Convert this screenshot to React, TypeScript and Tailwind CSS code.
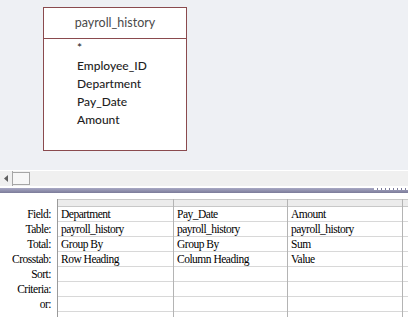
const fields = ["*", "Employee_ID", "Department", "Pay_Date", "Amount"];

const labels = ["Field:", "Table:", "Total:", "Crosstab:", "Sort:", "Criteria:", "or:", ""];

const columns = [
  { w: "w-[116px]", cells: ["Department", "payroll_history", "Group By", "Row Heading", "", "", "", ""] },
  { w: "w-[114px]", cells: ["Pay_Date", "payroll_history", "Group By", "Column Heading", "", "", "", ""] },
  { w: "w-[115px]", cells: ["Amount", "payroll_history", "Sum", "Value", "", "", "", ""] },
  { w: "w-[20px]", cells: ["", "", "", "", "", "", "", ""] },
];

function TableBox() {
  return (
    <div className="h-[144px] w-[144px] border border-[#8a4a4e] bg-white">
      <div className="flex h-[31px] items-center justify-center border-b border-[#8a4a4e] font-['Lato',sans-serif] text-[12.5px] text-[#4a4a4a]">
        payroll_history
      </div>
      <ul className="pl-[33px] font-['Lato',sans-serif] text-[12px] font-medium leading-[18px] text-[#1e1e1e]">
        {fields.map((f) => (
          <li key={f}>{f}</li>
        ))}
      </ul>
    </div>
  );
}

function ScrollStrip() {
  return (
    <div className="flex h-[16px] border-t border-white bg-[#f0f0f0]">
      <div className="flex w-[13px] items-center justify-center border-r border-[#a6a6a6]">
        <svg width="5" height="7" viewBox="0 0 5 7" aria-hidden>
          <path d="M4 0 L0 3.5 L4 7 Z" fill="#606060" />
        </svg>
      </div>
      <div className="my-[1px] w-[17px] border border-l-0 border-[#a6a6a6] bg-[#f7f7f7]" />
    </div>
  );
}

function Splitter() {
  return (
    <div className="mt-[2px] flex h-[5px] justify-end bg-gradient-to-b from-[#a9a9c4] to-[#7b7b99]">
      <div className="h-[2px] w-[34px] bg-[repeating-linear-gradient(90deg,#ffffff_0_3px,#7b7b99_3px_4px)]" />
    </div>
  );
}

export default function App() {
  return (
    <div className="h-[317px] w-[408px] overflow-hidden bg-white">
      <div className="h-[170px] bg-[#eef0f4] pl-[43px] pt-[7px]">
        <TableBox />
      </div>
      <ScrollStrip />
      <Splitter />
      <div className="mt-[6px] flex font-['Liberation_Serif',serif] text-[11.5px] tracking-[-0.5px] text-black">
        <div className="w-[57px] shrink-0 pt-[8px]">
          {labels.map((l, i) => (
            <div key={i} className="h-[15px] pr-[6px] text-right leading-[15px]">
              {l}
            </div>
          ))}
        </div>
        <div className="flex shrink-0 border-l border-[#9a9a9a]">
          {columns.map((c, ci) => (
            <div key={ci} className={`${c.w} shrink-0 border-r border-[#b4b4b4]`}>
              <div className="h-[8px] border-b border-t border-[#c8c8c8] bg-[#ececec]" />
              {c.cells.map((t, ri) => (
                <div key={ri} className="h-[15px] border-b border-[#d8d8d8] pl-[3px] leading-[14px]">
                  {t}
                </div>
              ))}
            </div>
          ))}
        </div>
      </div>
    </div>
  );
}
